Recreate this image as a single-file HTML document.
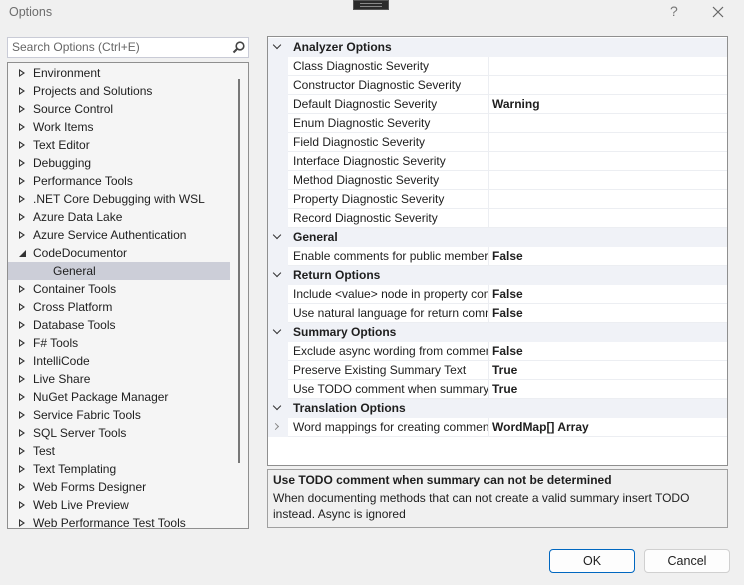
<!DOCTYPE html>
<html><head><style>
*{box-sizing:border-box;margin:0;padding:0}
body{width:744px;height:585px;background:#f0f0f0;font-family:"Segoe UI","Liberation Sans",sans-serif;font-size:12px;color:#1e1e1e;position:relative;overflow:hidden}
.abs{position:absolute}
.title{left:9px;top:5px;font-size:12.5px;color:#6d6d6d}
.grip{left:353px;top:0;width:36px;height:10px;background:#2b2b2b;border:1px solid #555}
.grip:before,.grip:after{content:"";position:absolute;left:6px;right:6px;height:1px;background:#888}
.grip:before{top:2px}.grip:after{top:5px}
.search{left:7px;top:37px;width:242px;height:21px;background:#fff;border:1px solid #c9cbd6;padding:2px 4px;color:#666}
.tree{left:7px;top:62px;width:242px;height:467px;background:#f5f5f5;border:1px solid #8f8f8f;overflow:hidden}
.tree .thumb{position:absolute;left:230px;top:16px;width:2px;height:384px;background:#777}
.row{position:absolute;left:0;height:18px;line-height:18px;width:222px;white-space:nowrap}
.row .tx{position:absolute;left:25px}
.row .ar{position:absolute;left:11px;top:5px;width:0;height:0;border-left:6px solid #333;border-top:4px solid transparent;border-bottom:4px solid transparent}
.row .ar:after{content:"";position:absolute;left:-5px;top:-2px;border-left:3px solid #f5f5f5;border-top:2px solid transparent;border-bottom:2px solid transparent}
.sel{background:#ccced8}
.grid{left:267px;top:36px;width:461px;height:430px;background:#fff;border:1px solid #8f8f8f;overflow:hidden}
.g{position:absolute;left:0;width:459px;height:19px;line-height:18px;white-space:nowrap}
.g.cat{background:#f0f2f7;font-weight:bold}
.g.cat .n{left:25px}
.g .n{position:absolute;left:25px;width:195px;overflow:hidden}
.g.p{background:#fff;border-bottom:1px solid #eceef2}
.g.p:before{content:"";position:absolute;left:0;top:0;width:20px;height:19px;background:#f0f2f7}
.g.p .sep{position:absolute;left:220px;top:0;width:1px;height:19px;background:#eceef2}
.g .v{position:absolute;left:224px;font-weight:bold}
.chev{position:absolute;left:6px;top:4px;width:6px;height:6px;border-right:1.5px solid #333;border-bottom:1.5px solid #333;transform:rotate(45deg)}
.chevr{position:absolute;left:5px;top:6px;width:5px;height:5px;border-right:1.5px solid #888;border-bottom:1.5px solid #888;transform:rotate(-45deg)}
.desc{left:267px;top:469px;width:461px;height:59px;border:1px solid #a0a0a0;padding:2px 5px;background:#f0f0f0;line-height:16px}
.desc b{display:block;margin-bottom:2px}
.btn{top:549px;height:24px;width:86px;background:#fdfdfd;border:1px solid #d0d0d0;border-radius:4px;text-align:center;line-height:22px;font-size:12.5px}
</style></head><body>
<div class="abs title">Options</div>
<div class="abs grip"></div>
<div class="abs" style="left:670px;top:3px;color:#777;font-size:14px">?</div>
<svg class="abs" style="left:712px;top:6px" width="12" height="12"><path d="M1 1L11 11M11 1L1 11" stroke="#666" stroke-width="1.2"/></svg>
<div class="abs search">Search Options (Ctrl+E)
<svg style="position:absolute;right:3px;top:3px" width="13" height="13"><circle cx="8" cy="5" r="3.8" fill="none" stroke="#444" stroke-width="1.6"/><path d="M5.5 7.5L1.5 11.5" stroke="#444" stroke-width="2"/></svg></div>
<div class="abs tree">
<div class="thumb"></div>
<div class="row" style="top:1px"><span class="ar"></span><span class="tx">Environment</span></div>
<div class="row" style="top:19px"><span class="ar"></span><span class="tx">Projects and Solutions</span></div>
<div class="row" style="top:37px"><span class="ar"></span><span class="tx">Source Control</span></div>
<div class="row" style="top:55px"><span class="ar"></span><span class="tx">Work Items</span></div>
<div class="row" style="top:73px"><span class="ar"></span><span class="tx">Text Editor</span></div>
<div class="row" style="top:91px"><span class="ar"></span><span class="tx">Debugging</span></div>
<div class="row" style="top:109px"><span class="ar"></span><span class="tx">Performance Tools</span></div>
<div class="row" style="top:127px"><span class="ar"></span><span class="tx">.NET Core Debugging with WSL</span></div>
<div class="row" style="top:145px"><span class="ar"></span><span class="tx">Azure Data Lake</span></div>
<div class="row" style="top:163px"><span class="ar"></span><span class="tx">Azure Service Authentication</span></div>
<div class="row" style="top:181px"><svg style="position:absolute;left:11px;top:6px" width="7" height="7"><path d="M7 0L7 7L0 7Z" fill="#333"/></svg><span class="tx">CodeDocumentor</span></div>
<div class="row sel" style="top:199px"><span class="tx" style="left:45px">General</span></div>
<div class="row" style="top:217px"><span class="ar"></span><span class="tx">Container Tools</span></div>
<div class="row" style="top:235px"><span class="ar"></span><span class="tx">Cross Platform</span></div>
<div class="row" style="top:253px"><span class="ar"></span><span class="tx">Database Tools</span></div>
<div class="row" style="top:271px"><span class="ar"></span><span class="tx">F# Tools</span></div>
<div class="row" style="top:289px"><span class="ar"></span><span class="tx">IntelliCode</span></div>
<div class="row" style="top:307px"><span class="ar"></span><span class="tx">Live Share</span></div>
<div class="row" style="top:325px"><span class="ar"></span><span class="tx">NuGet Package Manager</span></div>
<div class="row" style="top:343px"><span class="ar"></span><span class="tx">Service Fabric Tools</span></div>
<div class="row" style="top:361px"><span class="ar"></span><span class="tx">SQL Server Tools</span></div>
<div class="row" style="top:379px"><span class="ar"></span><span class="tx">Test</span></div>
<div class="row" style="top:397px"><span class="ar"></span><span class="tx">Text Templating</span></div>
<div class="row" style="top:415px"><span class="ar"></span><span class="tx">Web Forms Designer</span></div>
<div class="row" style="top:433px"><span class="ar"></span><span class="tx">Web Live Preview</span></div>
<div class="row" style="top:451px"><span class="ar"></span><span class="tx">Web Performance Test Tools</span></div>
</div>
<div class="abs grid">
<div class="g cat" style="top:1px"><span class="chev"></span><span class="n">Analyzer Options</span></div>
<div class="g p" style="top:20px"><span class="n">Class Diagnostic Severity</span><span class="sep"></span></div>
<div class="g p" style="top:39px"><span class="n">Constructor Diagnostic Severity</span><span class="sep"></span></div>
<div class="g p" style="top:58px"><span class="n">Default Diagnostic Severity</span><span class="sep"></span><span class="v">Warning</span></div>
<div class="g p" style="top:77px"><span class="n">Enum Diagnostic Severity</span><span class="sep"></span></div>
<div class="g p" style="top:96px"><span class="n">Field Diagnostic Severity</span><span class="sep"></span></div>
<div class="g p" style="top:115px"><span class="n">Interface Diagnostic Severity</span><span class="sep"></span></div>
<div class="g p" style="top:134px"><span class="n">Method Diagnostic Severity</span><span class="sep"></span></div>
<div class="g p" style="top:153px"><span class="n">Property Diagnostic Severity</span><span class="sep"></span></div>
<div class="g p" style="top:172px"><span class="n">Record Diagnostic Severity</span><span class="sep"></span></div>
<div class="g cat" style="top:191px"><span class="chev"></span><span class="n">General</span></div>
<div class="g p" style="top:210px"><span class="n">Enable comments for public members</span><span class="sep"></span><span class="v">False</span></div>
<div class="g cat" style="top:229px"><span class="chev"></span><span class="n">Return Options</span></div>
<div class="g p" style="top:248px"><span class="n">Include &lt;value&gt; node in property comments</span><span class="sep"></span><span class="v">False</span></div>
<div class="g p" style="top:267px"><span class="n">Use natural language for return comments</span><span class="sep"></span><span class="v">False</span></div>
<div class="g cat" style="top:286px"><span class="chev"></span><span class="n">Summary Options</span></div>
<div class="g p" style="top:305px"><span class="n">Exclude async wording from comments</span><span class="sep"></span><span class="v">False</span></div>
<div class="g p" style="top:324px"><span class="n">Preserve Existing Summary Text</span><span class="sep"></span><span class="v">True</span></div>
<div class="g p" style="top:343px"><span class="n">Use TODO comment when summary can not be determined</span><span class="sep"></span><span class="v">True</span></div>
<div class="g cat" style="top:362px"><span class="chev"></span><span class="n">Translation Options</span></div>
<div class="g p" style="top:381px"><span class="chevr"></span><span class="n">Word mappings for creating comments</span><span class="sep"></span><span class="v">WordMap[] Array</span></div>
</div>
<div class="abs desc"><b>Use TODO comment when summary can not be determined</b>When documenting methods that can not create a valid summary insert TODO instead. Async is ignored</div>
<div class="abs btn" style="left:549px;border:1px solid #0067c0">OK</div>
<div class="abs btn" style="left:644px">Cancel</div>
</body></html>
